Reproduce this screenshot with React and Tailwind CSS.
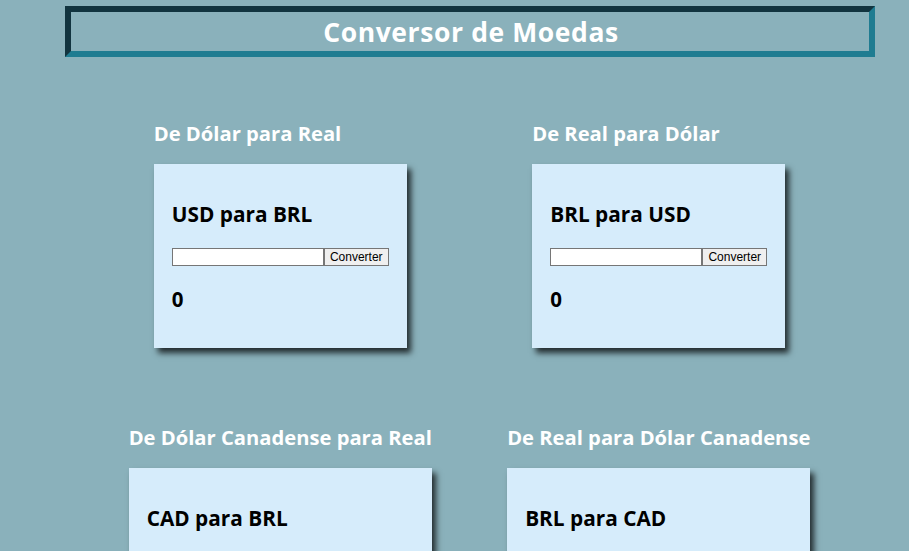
import React from "react";

const sans = { fontFamily: '"Open Sans", "Noto Sans", sans-serif' };

function Card({ title, from, to }) {
  return (
    <div className="justify-self-center flex flex-col">
      <h2 className="text-white font-bold text-[20.2px] leading-[24px] whitespace-nowrap" style={sans}>
        {title}
      </h2>
      <div className="mt-[19px] bg-[#d6ecfb] px-[18px] pt-[18px] pb-[17px] shadow-[4px_5px_6px_rgba(0,0,0,0.75)]">
        <h3 className="mt-[20px] text-[20.8px] leading-[24px] font-bold text-black whitespace-nowrap" style={sans}>
          {from} para {to}
        </h3>
        <div className="mt-[22px] flex" style={{ fontFamily: '"Liberation Sans", Arial, sans-serif' }}>
          <input
            type="text"
            className="w-[152px] h-[18px] bg-white border border-[#767676] outline-none"
          />
          <button className="w-[65px] h-[18px] bg-[#efefef] border border-[#767676] text-[12px] leading-[16px] text-black">
            Converter
          </button>
        </div>
        <p className="mt-[21px] mb-[20px] text-[20.5px] leading-[24px] font-bold text-black" style={sans}>
          0
        </p>
      </div>
    </div>
  );
}

export default function App() {
  return (
    <div className="w-full bg-[#8ab1bb] pt-[6px] overflow-hidden h-[551px]">
      <div className="ml-[65px] w-[810px] h-[51px] border-[6px] border-t-[#12343f] border-l-[#12343f] border-b-[#1f7c91] border-r-[#1f7c91] flex items-center justify-center">
        <h1
          className="text-white font-bold text-[26.5px] leading-[30px] tracking-[0.6px] ml-[2px]"
          style={{ fontFamily: '"Comic Sans MS", "Open Sans", sans-serif' }}
        >
          Conversor de Moedas
        </h1>
      </div>
      <div className="ml-[91px] w-[757px] grid grid-cols-2 mt-[64px] gap-y-[77px]">
        <Card title="De Dólar para Real" from="USD" to="BRL" />
        <Card title="De Real para Dólar" from="BRL" to="USD" />
        <Card title="De Dólar Canadense para Real" from="CAD" to="BRL" />
        <Card title="De Real para Dólar Canadense" from="BRL" to="CAD" />
      </div>
    </div>
  );
}
